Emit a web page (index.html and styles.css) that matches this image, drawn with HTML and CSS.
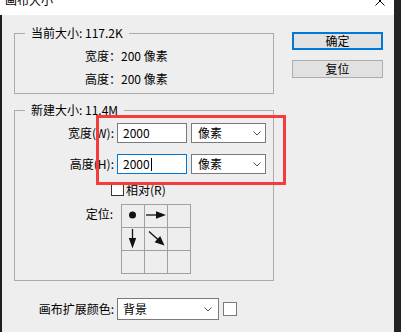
FILE: index.html
```
<!DOCTYPE html>
<html lang="zh-CN">
<head>
<meta charset="utf-8">
<title>画布大小</title>
<link rel="stylesheet" href="styles.css">
</head>
<body>
<div class="screen">
  <div class="win">
    <div class="titlebar">
      <span class="title">画布大小</span>
      <svg class="close" width="10" height="10" viewBox="0 0 10 10"><path d="M0.5 0.5L9.5 9.5M9.5 0.5L0.5 9.5" stroke="#000" stroke-width="1" fill="none"/></svg>
    </div>
    <div class="body">
      <div class="edge-l"></div>
      <div class="content">
        <div class="left">
          <fieldset class="group g1">
            <legend>当前大小: 117.2K</legend>
            <div class="info">宽度：200 像素</div>
            <div class="info">高度：200 像素</div>
          </fieldset>
          <fieldset class="group g2">
            <legend>新建大小: 11.4M</legend>
            <div class="field-row">
              <span class="lbl">宽度(W):</span>
              <div class="input">2000</div>
              <div class="select"><span>像素</span><svg class="chev" width="8" height="5" viewBox="0 0 8 5"><path d="M0.5 0.5L4 4L7.5 0.5" stroke="#555" fill="none"/></svg></div>
            </div>
            <div class="field-row r2">
              <span class="lbl">高度(H):</span>
              <div class="input focus">2000<span class="caret"></span></div>
              <div class="select"><span>像素</span><svg class="chev" width="8" height="5" viewBox="0 0 8 5"><path d="M0.5 0.5L4 4L7.5 0.5" stroke="#555" fill="none"/></svg></div>
            </div>
            <div class="check-row">
              <span class="checkbox"></span><span class="check-text">相对(R)</span>
            </div>
            <div class="pos-row">
              <span class="lbl pos">定位:</span>
              <div class="anchor">
                <div class="cell"><svg width="22" height="22" viewBox="0 0 22 22"><circle cx="10.5" cy="10" r="3.5" fill="#111"/></svg></div>
                <div class="cell"><svg width="22" height="22" viewBox="0 0 22 22"><path d="M1 10H13" stroke="#111" stroke-width="1.3"/><polygon points="11,6.3 21,10 11,13.7" fill="#111"/></svg></div>
                <div class="cell"></div>
                <div class="cell"><svg width="22" height="22" viewBox="0 0 22 22"><path d="M10.5 1V12" stroke="#111" stroke-width="1.3"/><polygon points="6.8,10 14.2,10 10.5,20.5" fill="#111"/></svg></div>
                <div class="cell"><svg width="22" height="22" viewBox="0 0 22 22"><path d="M4 3.5L14 12.5" stroke="#111" stroke-width="1.3"/><polygon points="19.5,17.5 15.2,8 9.6,14.2" fill="#111"/></svg></div>
                <div class="cell"></div>
                <div class="cell"></div>
                <div class="cell"></div>
                <div class="cell"></div>
              </div>
            </div>
          </fieldset>
          <div class="fill-row">
            <span class="lbl fill">画布扩展颜色:</span>
            <div class="select wide"><span>背景</span><svg class="chev" width="8" height="5" viewBox="0 0 8 5"><path d="M0.5 0.5L4 4L7.5 0.5" stroke="#555" fill="none"/></svg></div>
            <span class="swatch"></span>
          </div>
        </div>
        <div class="buttons">
          <div class="btn default">确定</div>
          <div class="btn">复位</div>
        </div>
      </div>
    </div>
  </div>
  <div class="edge-r"></div>
  <div class="mark"></div>
</div>
</body>
</html>
```
FILE: styles.css
```
html, body {
  margin: 0;
  padding: 0;
}
body {
  width: 401px;
  height: 332px;
  overflow: hidden;
  font-family: "Noto Sans CJK SC", "Microsoft YaHei", sans-serif;
  font-size: 12px;
  color: #000;
  background: #eeeeee;
}
.screen {
  position: relative;
  display: flex;
  height: 332px;
}
.win {
  width: 394px;
  display: flex;
  flex-direction: column;
}
.edge-r {
  flex: 1;
  background: #232323;
}
.titlebar {
  height: 15px;
  background: #fff;
  display: flex;
  justify-content: space-between;
  align-items: flex-start;
  overflow: hidden;
}
.title {
  margin: -8px 0 0 5px;
  line-height: 16px;
}
.close {
  margin: -4px 9px 0 0;
  display: block;
}
.body {
  flex: 1;
  display: flex;
  background: #eeeeee;
}
.edge-l {
  width: 2px;
  background: #1e1e1e;
}
.content {
  display: flex;
  align-items: flex-start;
}
.left {
  margin: 10px 0 0 12px;
  width: 260px;
}
.group {
  margin: 0;
  border: 1px solid #ababab;
  box-sizing: border-box;
  width: 260px;
  min-width: 0;
}
.group legend {
  margin-left: 10px;
  padding: 0 6px;
  line-height: 16px;
}
.g1 {
  padding: 3px 0 3px 0;
}
.info {
  margin-left: 70px;
  line-height: 23px;
  height: 23px;
}
.g2 {
  margin-top: 8px;
  padding: 5px 0 6px 0;
}
.field-row {
  display: flex;
  align-items: center;
  height: 20px;
}
.field-row.r2 {
  margin-top: 11px;
}
.lbl {
  width: 99px;
  margin-right: 3px;
  text-align: right;
  line-height: 16px;
  flex: none;
}
.input {
  width: 70px;
  height: 20px;
  box-sizing: border-box;
  border: 1px solid #7a7a7a;
  background: #fff;
  padding-left: 5px;
  line-height: 18px;
  display: flex;
  align-items: center;
}
.input.focus {
  border-color: #0078d7;
}
.caret {
  display: inline-block;
  width: 0;
  height: 13px;
  border-left: 1px solid #000;
  margin-left: 1px;
}
.select {
  width: 75px;
  height: 20px;
  margin-left: 4px;
  box-sizing: border-box;
  border: 1px solid #7a7a7a;
  background: #fff;
  display: flex;
  align-items: center;
  justify-content: space-between;
  padding: 0 4px 0 6px;
  line-height: 16px;
}
.chev {
  display: block;
}
.check-row {
  display: flex;
  align-items: center;
  height: 13px;
  margin: 9px 0 0 96px;
}
.checkbox {
  width: 13px;
  height: 13px;
  box-sizing: border-box;
  border: 1px solid #333;
  background: #fff;
}
.check-text {
  margin-left: 2px;
  line-height: 16px;
}
.pos-row {
  display: flex;
  align-items: flex-start;
  margin-top: 8px;
}
.lbl.pos {
  width: 98px;
  margin-right: 8px;
  line-height: 19px;
}
.anchor {
  display: grid;
  grid-template-columns: repeat(3, 22px);
  grid-template-rows: repeat(3, 22px);
  gap: 1px;
  padding: 1px;
  background: #a0a0a0;
}
.cell {
  background: #eeeeee;
}
.cell svg {
  display: block;
}
.fill-row {
  display: flex;
  align-items: center;
  margin-top: 17px;
}
.lbl.fill {
  width: 100px;
}
.select.wide {
  width: 102px;
  height: 22px;
  margin-left: 0;
  padding: 0 6px 0 5px;
}
.swatch {
  width: 14px;
  height: 14px;
  box-sizing: border-box;
  border: 1px solid #7a7a7a;
  background: #fff;
  margin-left: 4px;
}
.buttons {
  margin: 17px 0 0 18px;
  width: 91px;
  display: flex;
  flex-direction: column;
  gap: 10px;
}
.btn {
  height: 18px;
  box-sizing: border-box;
  background: #e1e1e1;
  border: 1px solid #adadad;
  display: flex;
  align-items: center;
  justify-content: center;
  line-height: 14px;
}
.btn.default {
  border: 2px solid #0078d7;
}
.mark {
  position: absolute;
  left: 96px;
  top: 115px;
  width: 190px;
  height: 70px;
  box-sizing: border-box;
  border: 3px solid #f43c3c;
}
```
